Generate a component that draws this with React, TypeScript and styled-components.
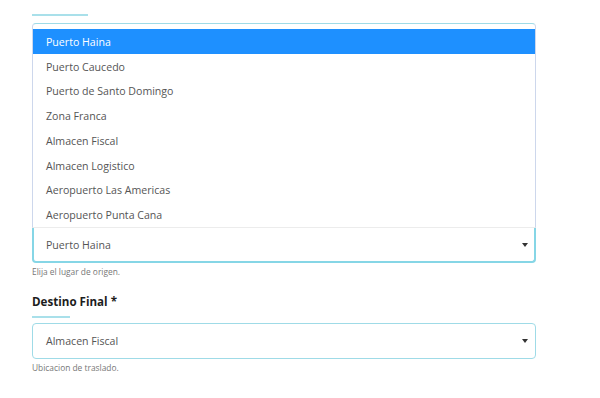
import React from 'react';
import styled, { createGlobalStyle } from 'styled-components';

const GlobalStyle = createGlobalStyle`
  html, body {
    margin: 0;
    padding: 0;
    background: #ffffff;
  }
  body {
    font-family: "Open Sans", "Noto Sans", Arial, sans-serif;
    color: #555;
  }
`;

const Page = styled.div`
  width: 504px;
  padding: 14px 64px 0 32px;
  display: flex;
  flex-direction: column;
`;

const Field = styled.div`
  display: flex;
  flex-direction: column;
`;

const Label = styled.div`
  font-size: 11.6px;
  font-weight: 700;
  color: #1d1d1d;
  line-height: 16px;
  margin-bottom: 6px;
`;

const Underline = styled.div<{ $gap: number; $width: number }>`
  width: ${(p) => p.$width}px;
  height: 2px;
  background: #a9e0ea;
  margin-bottom: ${(p) => p.$gap}px;
`;

const Popup = styled.ul`
  list-style: none;
  margin: 0;
  padding: 5px 0 0;
  border: 1px solid #cdd7ec;
  border-top: 1px solid #9fdbe7;
  border-bottom: 1px solid #ececec;
  border-radius: 4px 4px 0 0;
  background: #fff;
`;

const Option = styled.li<{ $active?: boolean }>`
  height: 24.75px;
  display: flex;
  align-items: center;
  padding: 1px 0 0 13px;
  box-sizing: border-box;
  font-size: 10.6px;
  color: ${(p) => (p.$active ? '#ffffff' : '#555')};
  background: ${(p) => (p.$active ? '#1e90ff' : 'transparent')};
`;

const SelectBox = styled.div<{ $focused?: boolean }>`
  height: ${(p) => (p.$focused ? 35 : 36)}px;
  box-sizing: border-box;
  display: flex;
  align-items: center;
  justify-content: space-between;
  background: #fff;
  border: ${(p) => (p.$focused ? '2px solid #86d6e6' : '1px solid #9fdbe7')};
  border-top: ${(p) => (p.$focused ? 'none' : '1px solid #9fdbe7')};
  border-radius: ${(p) => (p.$focused ? '0 0 4px 4px' : '4px')};
  padding-left: ${(p) => (p.$focused ? 12 : 13)}px;
  padding-right: ${(p) => (p.$focused ? 6 : 7)}px;
  font-size: 10.6px;
  color: #555;
`;

const Arrow = styled.span`
  width: 0;
  height: 0;
  border-left: 3px solid transparent;
  border-right: 3px solid transparent;
  border-top: 4px solid #333;
`;

const Help = styled.div`
  font-size: 8.4px;
  color: #777;
  line-height: 12px;
  margin-top: 3px;
`;

const Spacer = styled.div`
  height: 16px;
`;

const origins = [
  'Puerto Haina',
  'Puerto Caucedo',
  'Puerto de Santo Domingo',
  'Zona Franca',
  'Almacen Fiscal',
  'Almacen Logistico',
  'Aeropuerto Las Americas',
  'Aeropuerto Punta Cana',
];

export default function App() {
  return (
    <>
      <GlobalStyle />
      <Page>
        <Field>
          <Underline $width={56} $gap={7} />
          <Popup>
            {origins.map((o, i) => (
              <Option key={o} $active={i === 0}>
                {o}
              </Option>
            ))}
          </Popup>
          <SelectBox $focused>
            <span>Puerto Haina</span>
            <Arrow />
          </SelectBox>
          <Help>Elija el lugar de origen.</Help>
        </Field>
        <Spacer />
        <Field>
          <Label>Destino Final *</Label>
          <Underline $width={38} $gap={5} />
          <SelectBox>
            <span>Almacen Fiscal</span>
            <Arrow />
          </SelectBox>
          <Help>Ubicacion de traslado.</Help>
        </Field>
      </Page>
    </>
  );
}
